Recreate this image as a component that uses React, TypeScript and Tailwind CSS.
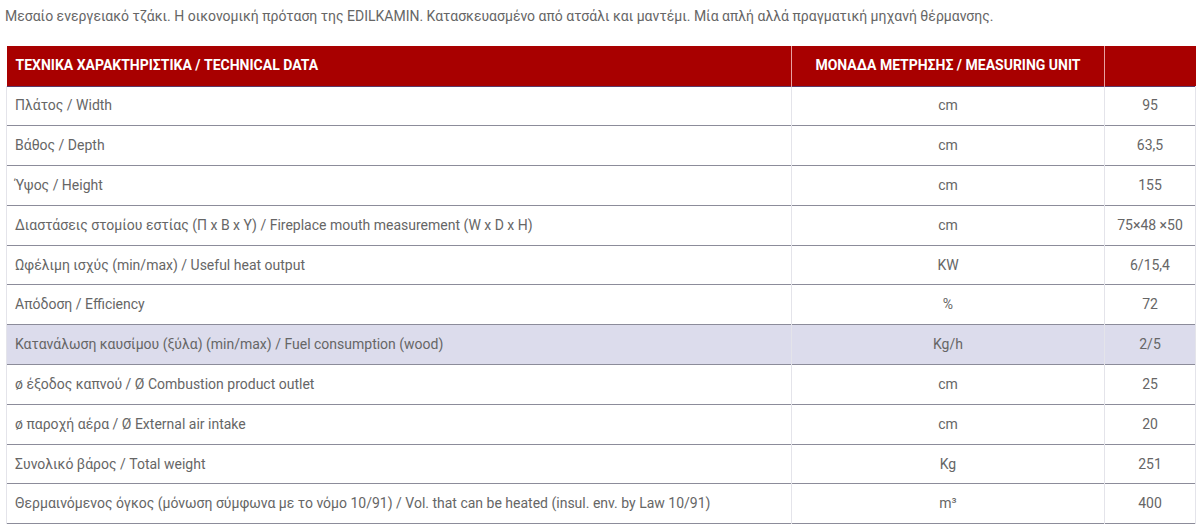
const rows: [string, string, string][] = [
  ["Πλάτος / Width", "cm", "95"],
  ["Βάθος / Depth", "cm", "63,5"],
  ["Ύψος / Height", "cm", "155"],
  ["Διαστάσεις στομίου εστίας (Π x Β x Υ) / Fireplace mouth measurement (W x D x H)", "cm", "75×48 ×50"],
  ["Ωφέλιμη ισχύς (min/max) / Useful heat output", "KW", "6/15,4"],
  ["Απόδοση / Efficiency", "%", "72"],
  ["Κατανάλωση καυσίμου (ξύλα) (min/max) / Fuel consumption (wood)", "Kg/h", "2/5"],
  ["ø έξοδος καπνού / Ø Combustion product outlet", "cm", "25"],
  ["ø παροχή αέρα / Ø External air intake", "cm", "20"],
  ["Συνολικό βάρος / Total weight", "Kg", "251"],
  ["Θερμαινόμενος όγκος (μόνωση σύμφωνα με το νόμο 10/91) / Vol. that can be heated (insul. env. by Law 10/91)", "m³", "400"],
];

export default function App() {
  return (
    <div className="w-[1200px] h-[529px] bg-white overflow-hidden font-['Roboto',sans-serif] text-[14px] text-[#666]">
      <p className="pl-[5px] pt-[6px] h-[46px] leading-[20px] text-[#666]">
        Μεσαίο ενεργειακό τζάκι. Η οικονομική πρόταση της EDILKAMIN. Κατασκευασμένο από ατσάλι και μαντέμι. Μία απλή αλλά πραγματική μηχανή θέρμανσης.
      </p>
      <table className="ml-[6px] w-[1189px] border-collapse table-fixed">
        <colgroup>
          <col className="w-[785px]" />
          <col className="w-[313px]" />
          <col className="w-[91px]" />
        </colgroup>
        <thead>
          <tr className="bg-[#a80000] text-white font-bold text-[14px] h-[40px] border-b border-[#5a3a6a]">
            <th className="text-left pl-[9px] font-bold border-r border-[#e8a0a0]">ΤΕΧΝΙΚΑ ΧΑΡΑΚΤΗΡΙΣΤΙΚΑ / TECHNICAL DATA</th>
            <th className="text-center font-bold border-r border-[#e8a0a0]">ΜΟΝΑΔΑ ΜΕΤΡΗΣΗΣ / MEASURING UNIT</th>
            <th />
          </tr>
        </thead>
        <tbody>
          {rows.map(([label, unit, value], i) => (
            <tr
              key={i}
              className={`h-[39.8px] border-b border-[#8c8c9a] ${i === 6 ? "bg-[#dcdcec]" : "bg-white"}`}
            >
              <td className="pl-[8px] border-l border-r border-[#e4e4ea] whitespace-nowrap">{label}</td>
              <td className="text-center border-r border-[#e4e4ea]">{unit}</td>
              <td className="text-center border-r border-[#e4e4ea]">{value}</td>
            </tr>
          ))}
        </tbody>
      </table>
    </div>
  );
}
